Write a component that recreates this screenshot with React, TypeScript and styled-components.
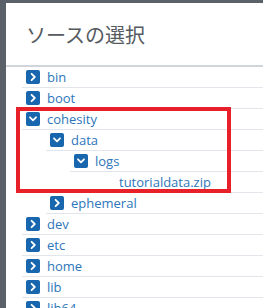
import React from "react";
import styled, { createGlobalStyle } from "styled-components";

const Global = createGlobalStyle`
  html, body { margin: 0; padding: 0; background: #5b6168; }
  body { width: 263px; height: 308px; overflow: hidden; }
`;

const Panel = styled.div`
  position: relative;
  margin: 3px 0 0 6px;
  background: #ffffff;
  height: 305px;
  overflow: hidden;
`;

const Header = styled.div`
  height: 62px;
  display: flex;
  align-items: center;
  padding-left: 20px;
  font-family: "Noto Sans CJK JP", "Noto Sans", sans-serif;
  font-size: 20px;
  color: #555a60;
  border-bottom: 2px solid #d0d4db;
  box-sizing: content-box;
`;

const Tree = styled.div`
  padding-left: 16px;
`;

const Children = styled.div`
  margin-left: 24px;
`;

const Row = styled.div`
  display: flex;
  align-items: center;
  height: 20px;
  border-bottom: 1px solid #e2e5e9;
  padding-left: 4px;
  gap: 7px;
`;

const Toggle = styled.span<{ $hidden?: boolean }>`
  width: 14px;
  height: 14px;
  flex: none;
  border-radius: 2px;
  background: ${(p) => (p.$hidden ? "transparent" : "#1766ae")};
  display: flex;
  align-items: center;
  justify-content: center;
`;

const Label = styled.span`
  font-family: "Open Sans", "Liberation Sans", sans-serif;
  font-size: 13px;
  color: #2d76bb;
  line-height: 20px;
`;

const Highlight = styled.div`
  position: absolute;
  left: 10px;
  top: 104px;
  width: 215px;
  height: 86px;
  border: 4px solid #e8202a;
  box-sizing: border-box;
  pointer-events: none;
`;

type Node = { name: string; open?: boolean; file?: boolean; children?: Node[] };

const data: Node[] = [
  { name: "bin" },
  { name: "boot" },
  {
    name: "cohesity",
    open: true,
    children: [
      {
        name: "data",
        open: true,
        children: [
          { name: "logs", open: true, children: [{ name: "tutorialdata.zip", file: true }] },
        ],
      },
      { name: "ephemeral" },
    ],
  },
  { name: "dev" },
  { name: "etc" },
  { name: "home" },
  { name: "lib" },
  { name: "lib64" },
];

const Chevron = ({ open }: { open?: boolean }) => (
  <svg width="10" height="10" viewBox="0 0 10 10" fill="none">
    {open ? (
      <path d="M2 3.3 L5 6.3 L8 3.3" stroke="#fff" strokeWidth="1.8" strokeLinecap="round" strokeLinejoin="round" />
    ) : (
      <path d="M3.6 1.8 L6.8 5 L3.6 8.2" stroke="#fff" strokeWidth="1.8" strokeLinecap="round" strokeLinejoin="round" />
    )}
  </svg>
);

const TreeNode = ({ node }: { node: Node }) => (
  <>
    <Row>
      <Toggle $hidden={node.file}>{!node.file && <Chevron open={node.open} />}</Toggle>
      <Label>{node.name}</Label>
    </Row>
    {node.open && node.children && (
      <Children>
        {node.children.map((c) => (
          <TreeNode key={c.name} node={c} />
        ))}
      </Children>
    )}
  </>
);

export default function App() {
  return (
    <>
      <Global />
      <Panel>
        <Header>ソースの選択</Header>
        <Tree>
          {data.map((n) => (
            <TreeNode key={n.name} node={n} />
          ))}
        </Tree>
        <Highlight />
      </Panel>
    </>
  );
}
